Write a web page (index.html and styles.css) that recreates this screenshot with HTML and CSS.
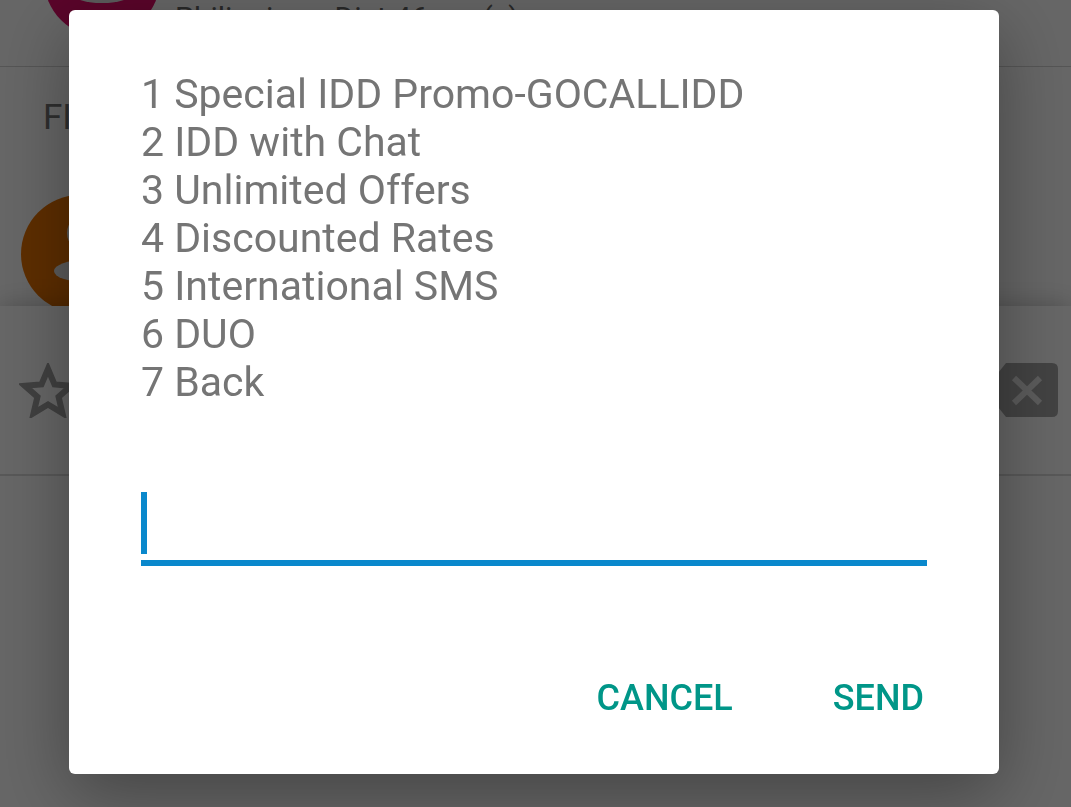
FILE: index.html
```html
<!DOCTYPE html>
<html lang="en">
<head>
<meta charset="utf-8">
<meta name="viewport" content="width=device-width, initial-scale=1">
<title>USSD menu</title>
<link rel="stylesheet" href="styles.css">
</head>
<body>
<main class="dialer" aria-hidden="true">
  <section class="call-row">
    <svg class="avatar avatar-call" viewBox="0 0 118 118"><circle cx="59" cy="59" r="58" fill="#e00c68"/><circle cx="59" cy="38" r="19" fill="#e4e4e4"/><ellipse cx="59" cy="72" rx="32" ry="11" fill="#e4e4e4"/></svg>
    <p class="call-meta">Philippines, Dist 46 sec(s)</p>
  </section>
  <section class="contacts">
    <h2 class="contacts-title">FI</h2>
    <svg class="avatar" viewBox="0 0 118 118"><circle cx="59" cy="59" r="59" fill="#e87200"/><circle cx="65" cy="38" r="19" fill="#e4e4e4"/><ellipse cx="64" cy="76" rx="31" ry="11" fill="#e4e4e4"/></svg>
  </section>
  <section class="digits">
    <svg class="star" viewBox="2 2 20 19"><path d="M22 9.240l-7.190-.620L12 2 9.190 8.630 2 9.240l5.460 4.730L5.820 21 12 17.270 18.180 21l-1.630-7.030L22 9.240zM12 15.400l-3.760 2.270 1-4.280-3.320-2.880 4.380-.380L12 6.100l1.710 4.040 4.380.380-3.320 2.880 1 4.280L12 15.400z" fill="#a0a0a0" stroke="#a0a0a0" stroke-width=".5"/></svg>
    <svg class="erase" viewBox="0 0 60 54"><path d="M8 0H54Q60 0 60 6V48Q60 54 54 54H8L0 44V10Z" fill="#a6a6a6"/><path d="M16 15 42 40M42 15 16 40" stroke="#e4e4e4" stroke-width="6"/></svg>
  </section>
  <section class="pad"></section>
</main>
<div class="scrim">
  <form class="dialog" role="dialog" aria-label="Service menu">
    <label class="message" for="reply">1 Special IDD Promo-GOCALLIDD<br>2 IDD with Chat<br>3 Unlimited Offers<br>4 Discounted Rates<br>5 International SMS<br>6 DUO<br>7 Back</label>
    <div class="field">
      <input class="reply" id="reply" type="text" autocomplete="off">
      <span class="caret"></span>
    </div>
    <div class="actions">
      <button class="action" type="button">CANCEL</button>
      <button class="action" type="submit">SEND</button>
    </div>
  </form>
</div>
</body>
</html>
```
FILE: styles.css
```css
* {
  box-sizing: border-box;
}

body {
  margin: 0;
  font-family: Roboto, "Liberation Sans", sans-serif;
  background: #fff;
}

.dialer {
  display: flex;
  flex-direction: column;
  height: 100vh;
  overflow: hidden;
}

.avatar {
  display: block;
  flex: none;
  width: 118px;
  height: 118px;
}

.call-row {
  display: flex;
  align-items: flex-end;
  gap: 14px;
  height: 67px;
  flex: none;
  padding: 0 43px 28px;
  border-bottom: 1px solid #d4d4d4;
}

.call-meta {
  margin: 0;
  font-size: 30px;
  line-height: 40px;
  color: #666;
}

.contacts {
  height: 239px;
  flex: none;
  padding: 31px 21px 0;
  overflow: hidden;
}

.contacts-title {
  margin: 0 0 57px 22px;
  font-size: 35px;
  font-weight: 400;
  line-height: 40px;
  color: #757575;
}

.digits {
  display: flex;
  align-items: center;
  justify-content: space-between;
  height: 170px;
  flex: none;
  padding: 0 13px 0 19px;
  border-bottom: 2px solid #dcdcdc;
  background: #fff;
  box-shadow: 0 0 24px rgba(0, 0, 0, 0.25);
}

.star {
  width: 58px;
  height: 55px;
}

.erase {
  width: 60px;
  height: 54px;
}

.pad {
  flex: 1;
  position: relative;
  background: #fff;
}

.scrim {
  position: fixed;
  inset: 0;
  display: flex;
  align-items: flex-start;
  padding: 10px 72px 32px 69px;
  background: rgba(0, 0, 0, 0.6);
}

.dialog {
  flex: 1;
  padding: 60px 72px 43px;
  border-radius: 6px;
  background: #fff;
  box-shadow: 0 20px 72px rgba(0, 0, 0, 0.35);
}

.message {
  display: block;
  font-size: 41px;
  line-height: 48px;
  color: #757575;
}

.field {
  position: relative;
  margin-top: 78px;
}

.reply {
  display: block;
  width: 100%;
  height: 82px;
  padding: 0 8px 6px;
  border: 0;
  border-bottom: 6px solid #0a88cc;
  outline: 0;
  background: transparent;
  font: inherit;
  font-size: 41px;
  color: #212121;
}

.caret {
  position: absolute;
  left: 0;
  bottom: 12px;
  width: 6px;
  height: 62px;
  background: #0a88cc;
}

.actions {
  display: flex;
  justify-content: flex-end;
  gap: 100px;
  margin-top: 99px;
  padding-right: 3px;
}

.action {
  padding: 0;
  border: 0;
  background: transparent;
  font-family: inherit;
  font-size: 36px;
  font-weight: 500;
  line-height: 66px;
  color: #009688;
}
```
